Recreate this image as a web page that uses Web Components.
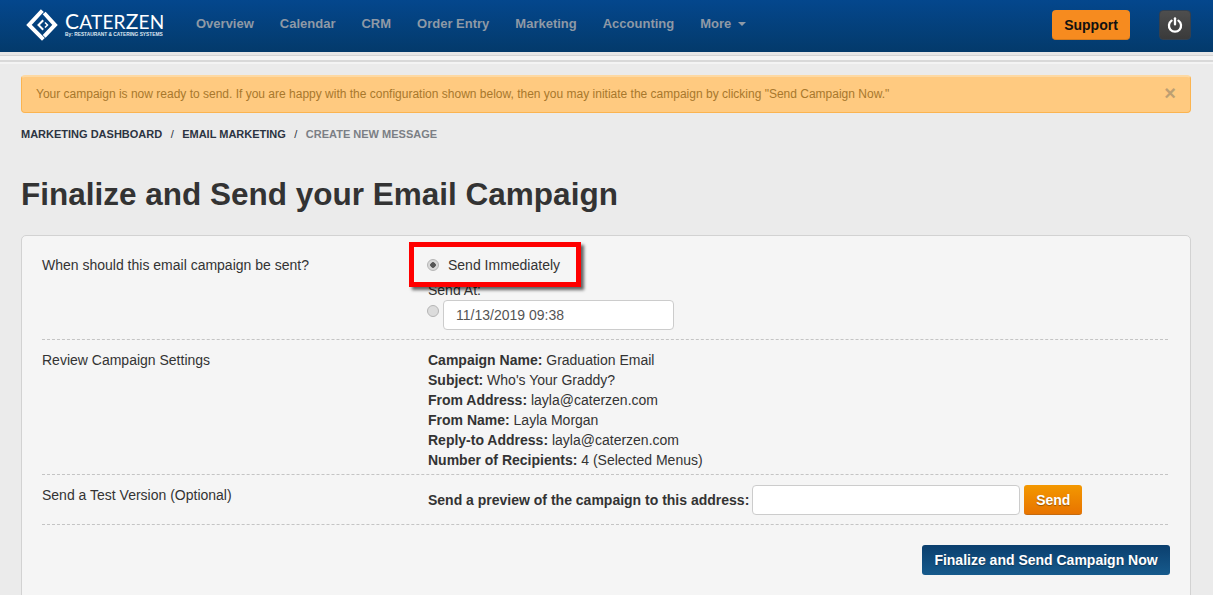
<!DOCTYPE html>
<html>
<head>
<meta charset="utf-8">
<title>CaterZen</title>
<style>
  html, body { margin: 0; padding: 0; height: 595px; overflow: hidden; background: #ebebeb; }
  body { font: 14px/20px "Liberation Sans", Arial, sans-serif; color: #333; }
  b { font-weight: 700; }
</style>
</head>
<body>
<cz-header></cz-header>
<main style="display:block;padding:10px 22px 0 21px">
  <cz-alert>Your campaign is now ready to send. If you are happy with the configuration shown below, then you may initiate the campaign by clicking "Send Campaign Now."</cz-alert>
  <cz-breadcrumb></cz-breadcrumb>
  <cz-title>Finalize and Send your Email Campaign</cz-title>
  <cz-panel>
    <cz-row style="--row-h:104px;--row-pad:19px">
      <span slot="label">When should this email campaign be sent?</span>
      <cz-send-options></cz-send-options>
    </cz-row>
    <cz-row style="--row-h:135px">
      <span slot="label">Review Campaign Settings</span>
      <cz-settings>
        <div><b>Campaign Name:</b> Graduation Email</div>
        <div><b>Subject:</b> Who's Your Graddy?</div>
        <div><b>From Address:</b> layla@caterzen.com</div>
        <div><b>From Name:</b> Layla Morgan</div>
        <div><b>Reply-to Address:</b> layla@caterzen.com</div>
        <div><b>Number of Recipients:</b> 4 (Selected Menus)</div>
      </cz-settings>
    </cz-row>
    <cz-row style="--row-h:50px">
      <span slot="label">Send a Test Version (Optional)</span>
      <cz-test-send></cz-test-send>
    </cz-row>
    <cz-footer-actions><cz-button variant="navy">Finalize and Send Campaign Now</cz-button></cz-footer-actions>
  </cz-panel>
</main>

<script>
  // small helper, every element just stamps its html into an open shadow root
  function shadow(el, html) {
    el.attachShadow({ mode: "open" }).innerHTML = html;
  }

  class CzHeader extends HTMLElement {
    constructor() {
      super();
      const links = ["Overview", "Calendar", "CRM", "Order Entry", "Marketing", "Accounting"];
      shadow(this, `
        <style>
          :host { display: block; }
          .bar { height: 52px; display: flex; align-items: flex-start; background: linear-gradient(#04478d, #033a6b); }
          .logo { display: flex; align-items: flex-start; width: 183px; padding: 9px 0 0 26px; box-sizing: border-box; color: #fff; flex: none; }
          .logo svg { flex: none; margin-right: 7px; }
          .word { display: flex; flex-direction: column; padding-top: 2px; }
          .name { font: 400 21px/20px Lato, sans-serif; letter-spacing: .2px; white-space: nowrap; }
          .name small { font-size: 19px; }
          .by { font: 700 4.850px/6px "Liberation Sans", sans-serif; white-space: nowrap; color: #dfe8f2; }
          nav { display: flex; gap: 26px; margin: 14px 0 0 13px; flex: 1; font: 700 13px/20px "Liberation Sans", sans-serif; color: #8e99a6; }
          .caret { display: inline-block; width: 0; height: 0; border: 4px solid transparent; border-top-color: #8e99a6; border-bottom: 0; margin-left: 3px; vertical-align: 2px; }
          .support { width: 78px; height: 30px; margin-top: 10px; display: flex; align-items: center; justify-content: center; background: #f68b1f; border-radius: 4px; color: #111; font: 700 14px/20px "Liberation Sans", sans-serif; border-bottom: 1px solid #d27a1e; box-sizing: border-box; }
          .power { width: 32px; height: 30px; margin: 10px 22px 0 29px; display: flex; align-items: center; justify-content: center; background: linear-gradient(#4e4e4e, #3a3a3a); border: 1px solid #33404f; border-radius: 4px; box-sizing: border-box; }
          .stripes { height: 13px; background: linear-gradient(#e6e6e6 0 3px, #d4d4d4 3px 4px, #f4f4f4 4px 8px, #d9d9d9 8px 10px, #f4f4f4 10px 12px, #ebebeb 12px); }
        </style>
        <div class="bar">
          <div class="logo">
            <svg width="32" height="32" viewBox="0 0 32 32" fill="none" stroke="#fff" stroke-linecap="square">
              <path d="M15 3 L3 16 L16 29" stroke-width="4"/>
              <path d="M19.500 5.500 L29 16 L19.500 26" stroke-width="4"/>
              <path d="M16.500 12 L12.500 16 L16.500 20" stroke-width="2"/>
              <path d="M19.500 14 L21.500 16 L19.500 18" stroke-width="1.500"/>
            </svg>
            <div class="word">
              <span class="name">C<small>ATER</small>Z<small>EN</small></span>
              <span class="by">By: RESTAURANT &amp; CATERING SYSTEMS</span>
            </div>
          </div>
          <nav>
            ${links.map(l => `<span>${l}</span>`).join("")}
            <span>More <i class="caret"></i></span>
          </nav>
          <div class="support">Support</div>
          <div class="power">
            <svg width="16" height="16" viewBox="0 0 14 14" fill="none" stroke="#fff" stroke-width="2" stroke-linecap="round">
              <path d="M4 3.200 A5.300 5.300 0 1 0 10 3.200"/>
              <path d="M7 1.200 V6.500"/>
            </svg>
          </div>
        </div>
        <div class="stripes"></div>
      `);
    }
  }

  class CzAlert extends HTMLElement {
    constructor() {
      super();
      shadow(this, `
        <style>
          :host { display: block; }
          .box { display: flex; justify-content: space-between; align-items: center; height: 38px; box-sizing: border-box; padding: 0 14px 1px 14px; background: #ffca80; border: 1px solid #fbb450; border-top: 2px solid #fdd9a3; border-radius: 4px; color: #a8782c; font-size: 12px; }
          .x { font: 700 20px/18px "Liberation Sans", sans-serif; color: #bd9f72; margin-top: -2px; }
        </style>
        <div class="box"><span><slot></slot></span><span class="x">&#215;</span></div>
      `);
    }
  }

  class CzBreadcrumb extends HTMLElement {
    constructor() {
      super();
      shadow(this, `
        <style>
          :host { display: block; padding-top: 11px; font: 700 11px/20px "Liberation Sans", sans-serif; color: #2c3442; }
          .sep { display: inline-block; width: 20px; text-align: center; font-weight: 400; }
          .cur { color: #7b7f85; }
        </style>
        MARKETING DASHBOARD<span class="sep">/</span>EMAIL MARKETING<span class="sep">/</span><span class="cur">CREATE NEW MESSAGE</span>
      `);
    }
  }

  class CzTitle extends HTMLElement {
    constructor() {
      super();
      shadow(this, `
        <style>
          :host { display: block; }
          h1 { margin: 0; padding: 30px 0 21px; font: 700 31.500px/40px "Liberation Sans", sans-serif; color: #333; }
        </style>
        <h1><slot></slot></h1>
      `);
    }
  }

  class CzPanel extends HTMLElement {
    constructor() {
      super();
      shadow(this, `
        <style>
          :host { display: block; }
          .panel { background: #f5f5f5; border: 1px solid #d2d2d2; border-radius: 5px; padding: 0 22px 0 20px; height: 420px; box-sizing: border-box; }
        </style>
        <div class="panel"><slot></slot></div>
      `);
    }
  }

  class CzRow extends HTMLElement {
    constructor() {
      super();
      shadow(this, `
        <style>
          :host { display: grid; grid-template-columns: 385px 1fr; height: var(--row-h, 50px); box-sizing: border-box; border-bottom: 1px dashed #c4c4c4; padding-top: var(--row-pad, 10px); font-size: 14px; line-height: 20px; color: #333; }
        </style>
        <div><slot name="label"></slot></div>
        <div><slot></slot></div>
      `);
    }
  }

  class CzSendOptions extends HTMLElement {
    constructor() {
      super();
      shadow(this, `
        <style>
          :host { display: block; position: relative; }
          input[type=radio] { appearance: none; width: 12px; height: 12px; margin: 0; border-radius: 50%; border: 1px solid #b5b5b5; background: #dcdcdc; box-sizing: border-box; flex: none; }
          input[type=radio]:checked { background: radial-gradient(circle, #555 0 2.500px, #d8d8d8 3px); }
          .now { display: flex; align-items: center; gap: 9px; height: 20px; position: relative; z-index: 2; }
          .at { margin-top: 7px; line-height: 16px; padding-left: 1px; }
          .pick { display: flex; align-items: flex-start; gap: 4px; margin-top: 2px; }
          .pick input[type=radio] { margin-top: 5px; }
          .date { width: 231px; height: 30px; box-sizing: border-box; border: 1px solid #ccc; border-radius: 4px; background: #fff; padding-left: 12px; font: 14px/28px "Liberation Sans", sans-serif; color: #555; }
          /* the annotation sits over the options */
          .mark { position: absolute; left: -18px; top: -13px; width: 172px; height: 45px; box-sizing: border-box; border: 5px solid #f00; box-shadow: 3px 3px 3px rgba(0,0,0,.6); background: #f5f5f5; z-index: 1; pointer-events: none; }
        </style>
        <div class="now"><input type="radio" checked><span>Send Immediately</span></div>
        <div class="at">Send At:</div>
        <div class="pick"><input type="radio"><div class="date">11/13/2019 09:38</div></div>
        <div class="mark"></div>
      `);
    }
  }

  class CzSettings extends HTMLElement {
    constructor() {
      super();
      shadow(this, `<style>:host { display: block; line-height: 20px; padding-left: 1px; }</style><slot></slot>`);
    }
  }

  class CzTestSend extends HTMLElement {
    constructor() {
      super();
      shadow(this, `
        <style>
          :host { display: flex; align-items: center; gap: 4px; }
          b { font-weight: 700; white-space: nowrap; margin-left: 1px; margin-right: -1px; }
          .input { width: 268px; height: 30px; box-sizing: border-box; background: #fff; border: 1px solid #ccc; border-radius: 4px; }
        </style>
        <b>Send a preview of the campaign to this address:</b>
        <div class="input"></div>
        <cz-button variant="orange">Send</cz-button>
      `);
    }
  }

  class CzFooterActions extends HTMLElement {
    constructor() {
      super();
      shadow(this, `<style>:host { display: flex; justify-content: flex-end; padding-top: 20px; margin-right: -2px; }</style><slot></slot>`);
    }
  }

  class CzButton extends HTMLElement {
    constructor() {
      super();
      shadow(this, `
        <style>
          :host { display: inline-block; }
          .btn { display: flex; align-items: center; justify-content: center; height: 30px; box-sizing: border-box; border-radius: 3px; color: #fff; font: 700 14px/20px "Liberation Sans", sans-serif; text-shadow: 0 1px 1px rgba(0,0,0,.35); white-space: nowrap; }
          :host([variant=orange]) .btn { width: 58px; background: linear-gradient(#f39800, #e87400); border-bottom: 1px solid #c46a10; }
          :host([variant=navy]) .btn { width: 248px; background: linear-gradient(#0b3f6e, #165a8c); }
        </style>
        <div class="btn"><slot></slot></div>
      `);
    }
  }

  customElements.define("cz-header", CzHeader);
  customElements.define("cz-alert", CzAlert);
  customElements.define("cz-breadcrumb", CzBreadcrumb);
  customElements.define("cz-title", CzTitle);
  customElements.define("cz-panel", CzPanel);
  customElements.define("cz-row", CzRow);
  customElements.define("cz-send-options", CzSendOptions);
  customElements.define("cz-settings", CzSettings);
  customElements.define("cz-test-send", CzTestSend);
  customElements.define("cz-footer-actions", CzFooterActions);
  customElements.define("cz-button", CzButton);
</script>
</body>
</html>
